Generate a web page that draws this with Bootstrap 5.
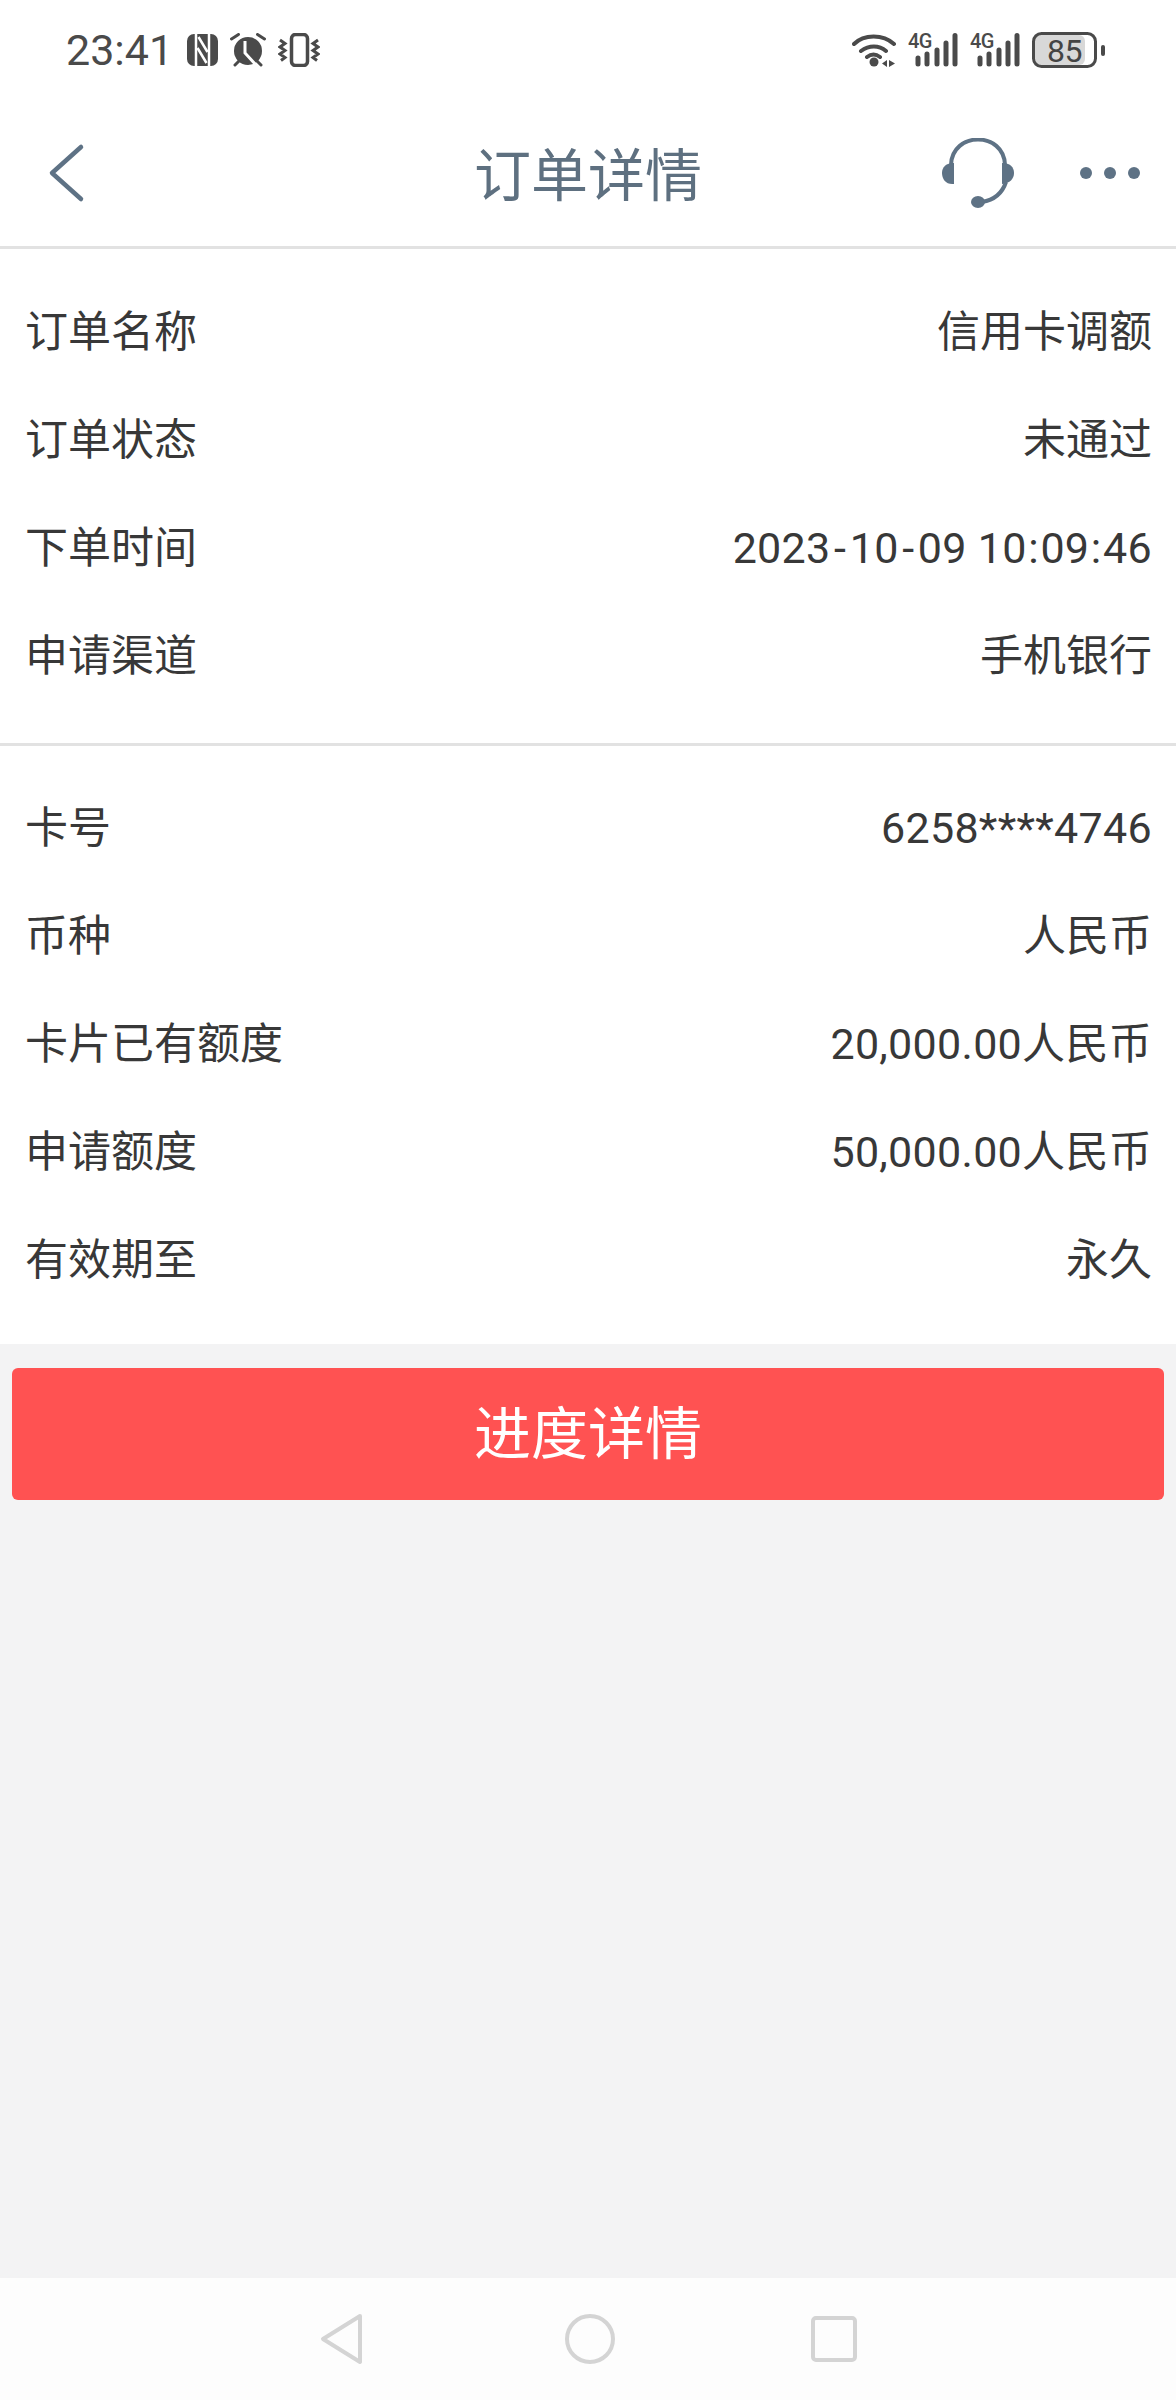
<!DOCTYPE html>
<html lang="zh-CN">
<head>
    <meta charset="UTF-8">
    <meta name="viewport" content="width=device-width, initial-scale=1.0">
    <title>订单详情</title>
    <link rel="stylesheet" href="https://cdn.jsdelivr.net/npm/bootstrap@5.3.0/dist/css/bootstrap.min.css">
    <style>
        body {
            background-color: #f3f3f4;
            font-family: Roboto, "Noto Sans CJK SC", sans-serif;
            color: #383838;
        }
        .phone-screen {
            height: 2400px;
        }
        .status-row {
            height: 100px;
            background: #fff;
            padding: 0 71px 0 66px;
            color: #4a4a4a;
        }
        .status-left, .status-right {
            gap: 12px;
        }
        .status-time {
            font-size: 43px;
            line-height: 1;
            margin-right: 2px;
        }
        .title-row {
            height: 149px;
            background: #fff;
            border-bottom: 3px solid #e2e2e2;
            padding: 0 36px 0 48px;
        }
        .page-title {
            font-size: 57px;
            line-height: 1;
            color: #5e7080;
        }
        .title-center {
            left: 0;
            right: 0;
            top: calc(50% + 3px);
            transform: translateY(-50%);
            pointer-events: none;
        }
        .headset-icon {
            margin-right: 66px;
        }
        .info-block {
            background: #fff;
        }
        .info-block.first-block {
            padding: 28px 24px 34px 25px;
            border-bottom: 3px solid #e2e2e2;
        }
        .info-block.second-block {
            padding: 27px 24px 31px 25px;
        }
        .info-row {
            height: 108px;
            padding-top: 2px;
            font-size: 43px;
        }
        .num-value {
            letter-spacing: 0.3px;
        }
        .sep-dash {
            margin: 0 3.5px;
        }
        .sep-colon {
            margin: 0 1.5px;
        }
        .action-wrap {
            padding: 24px 12px;
        }
        .btn-progress {
            height: 132px;
            background: #ff5252;
            border: 0;
            border-radius: 6px;
            color: #fff;
            font-size: 57px;
            line-height: 1;
        }
        .bottom-bar {
            height: 122px;
            background: #fdfdfd;
        }
        .nav-back-icon {
            margin-right: 201px;
        }
        .nav-home-icon {
            margin-right: 196px;
        }
        .net-label {
            font-family: Roboto, sans-serif;
            font-size: 20px;
            font-weight: 500;
            letter-spacing: -0.5px;
            fill: #4a4a4a;
        }
        .batt-label {
            font-family: Roboto, sans-serif;
            font-size: 32px;
            letter-spacing: -0.5px;
            fill: #444;
        }
    </style>
</head>
<body>
<div class="phone-screen d-flex flex-column">

    <div class="status-row d-flex align-items-center justify-content-between flex-shrink-0">
        <div class="status-left d-flex align-items-center">
            <span class="status-time">23:41</span>
            <svg width="31" height="32" viewBox="0 0 31 32">
                <rect width="31" height="32" rx="7" fill="#4a4a4a"/>
                <path d="M9 0v32M22 0v32" stroke="#fff" stroke-width="2.500"/>
                <path d="M11.500 3l9 15M10.500 14l9 15" stroke="#fff" stroke-width="2.500"/>
            </svg>
            <svg width="36" height="34" viewBox="0 0 36 34">
                <circle cx="18" cy="18" r="14" fill="#4a4a4a"/>
                <path d="M1.500 6l7-4.500M34.500 6l-7-4.500M5 32l4-4M31 32l-4-4" stroke="#4a4a4a" stroke-width="3" stroke-linecap="round"/>
                <path d="M15 8v12l11 12" fill="none" stroke="#fff" stroke-width="3"/>
            </svg>
            <svg width="42" height="34" viewBox="0 0 42 34">
                <rect x="13.500" y="1.500" width="16" height="31" rx="4" fill="none" stroke="#4a4a4a" stroke-width="3.500"/>
                <path d="M2 7l5 3.500-5 3.500 5 3.500-5 3.500 5 3.500-4 3M40 7l-5 3.500 5 3.500-5 3.500 5 3.500-5 3.500 4 3" fill="none" stroke="#4a4a4a" stroke-width="3"/>
            </svg>
        </div>
        <div class="status-right d-flex align-items-center">
            <svg width="44" height="34" viewBox="0 0 44 34">
                <path d="M2 11C12 1 31 1 42 11M9 18c8-6 18-6 25 0M15 24c4-3 9-3 13 0" fill="none" stroke="#4a4a4a" stroke-width="4" stroke-linecap="round"/>
                <circle cx="22" cy="29" r="4.500" fill="#4a4a4a"/>
                <path d="M35 27v7l-5-3.500zM37 27v7l6-3.500z" fill="#4a4a4a"/>
            </svg>
            <svg width="50" height="42" viewBox="0 -4 50 42">
                <text x="0" y="15" class="net-label">4G</text>
                <path d="M10 25v6M19 21v10M29 17v14M38 10v21M47 2.500v28.500" stroke="#4a4a4a" stroke-width="5" stroke-linecap="round"/>
            </svg>
            <svg width="50" height="42" viewBox="0 -4 50 42">
                <text x="0" y="15" class="net-label">4G</text>
                <path d="M10 25v6M19 21v10M29 17v14M38 10v21M47 2.500v28.500" stroke="#4a4a4a" stroke-width="5" stroke-linecap="round"/>
            </svg>
            <svg width="73" height="40" viewBox="0 -2 73 40">
                <rect x="3" y="3" width="50" height="30" rx="6" fill="#d8d8d8"/>
                <rect x="1.500" y="1.500" width="62" height="33" rx="8" fill="none" stroke="#4a4a4a" stroke-width="3"/>
                <text x="32.500" y="30" text-anchor="middle" class="batt-label">85</text>
                <rect x="69" y="13" width="4" height="11" rx="2" fill="#4a4a4a"/>
            </svg>
        </div>
    </div>

    <div class="title-row position-relative d-flex align-items-center justify-content-between flex-shrink-0">
        <svg width="38" height="60" viewBox="0 0 38 60">
            <path d="M33 4L4 30l29 26" fill="none" stroke="#5e7285" stroke-width="4.500" stroke-linecap="round" stroke-linejoin="round"/>
        </svg>
        <div class="page-title title-center position-absolute text-center">订单详情</div>
        <div class="d-flex align-items-center">
            <svg class="headset-icon" width="72" height="70" viewBox="0 0 72 70">
                <path d="M9 27C10 -7 62 -7 63 27" fill="none" stroke="#5e7285" stroke-width="4"/>
                <path d="M64 44C60 56 52 62 40 64" fill="none" stroke="#5e7285" stroke-width="4"/>
                <path d="M12 25v21C4 47 0 41 0 35s4-10 12-10z" fill="#5e7285"/>
                <path d="M60 25v21c8-1 12-5 12-11s-4-10-12-10z" fill="#5e7285"/>
                <ellipse cx="36" cy="64" rx="7" ry="6" fill="#5e7285"/>
            </svg>
            <svg width="60" height="12" viewBox="0 0 60 12">
                <circle cx="6" cy="6" r="6" fill="#5e7285"/>
                <circle cx="30" cy="6" r="6" fill="#5e7285"/>
                <circle cx="54" cy="6" r="6" fill="#5e7285"/>
            </svg>
        </div>
    </div>

    <div class="info-block first-block flex-shrink-0">
        <div class="info-row d-flex align-items-center justify-content-between"><span>订单名称</span><span>信用卡调额</span></div>
        <div class="info-row d-flex align-items-center justify-content-between"><span>订单状态</span><span>未通过</span></div>
        <div class="info-row d-flex align-items-center justify-content-between"><span>下单时间</span><span class="num-value">2023<span class="sep-dash">-</span>10<span class="sep-dash">-</span>09 10<span class="sep-colon">:</span>09<span class="sep-colon">:</span>46</span></div>
        <div class="info-row d-flex align-items-center justify-content-between"><span>申请渠道</span><span>手机银行</span></div>
    </div>

    <div class="info-block second-block flex-shrink-0">
        <div class="info-row d-flex align-items-center justify-content-between"><span>卡号</span><span class="num-value">6258****4746</span></div>
        <div class="info-row d-flex align-items-center justify-content-between"><span>币种</span><span>人民币</span></div>
        <div class="info-row d-flex align-items-center justify-content-between"><span>卡片已有额度</span><span class="num-value">20,000.00人民币</span></div>
        <div class="info-row d-flex align-items-center justify-content-between"><span>申请额度</span><span class="num-value">50,000.00人民币</span></div>
        <div class="info-row d-flex align-items-center justify-content-between"><span>有效期至</span><span>永久</span></div>
    </div>

    <div class="action-wrap flex-shrink-0">
        <button type="button" class="btn btn-progress w-100">进度详情</button>
    </div>

    <div class="flex-grow-1"></div>

    <div class="bottom-bar d-flex align-items-center justify-content-center flex-shrink-0">
        <svg class="nav-back-icon" width="44" height="52" viewBox="0 0 44 52">
            <path d="M40 3L3 26l37 23z" fill="none" stroke="#d4d4d4" stroke-width="4" stroke-linejoin="round"/>
        </svg>
        <svg class="nav-home-icon" width="50" height="50" viewBox="0 0 50 50">
            <circle cx="25" cy="25" r="23" fill="none" stroke="#d4d4d4" stroke-width="4"/>
        </svg>
        <svg width="46" height="46" viewBox="0 0 46 46">
            <rect x="2" y="2" width="42" height="42" rx="3" fill="none" stroke="#d4d4d4" stroke-width="4"/>
        </svg>
    </div>

</div>
<script src="https://cdn.jsdelivr.net/npm/bootstrap@5.3.0/dist/js/bootstrap.bundle.min.js"></script>
</body>
</html>
